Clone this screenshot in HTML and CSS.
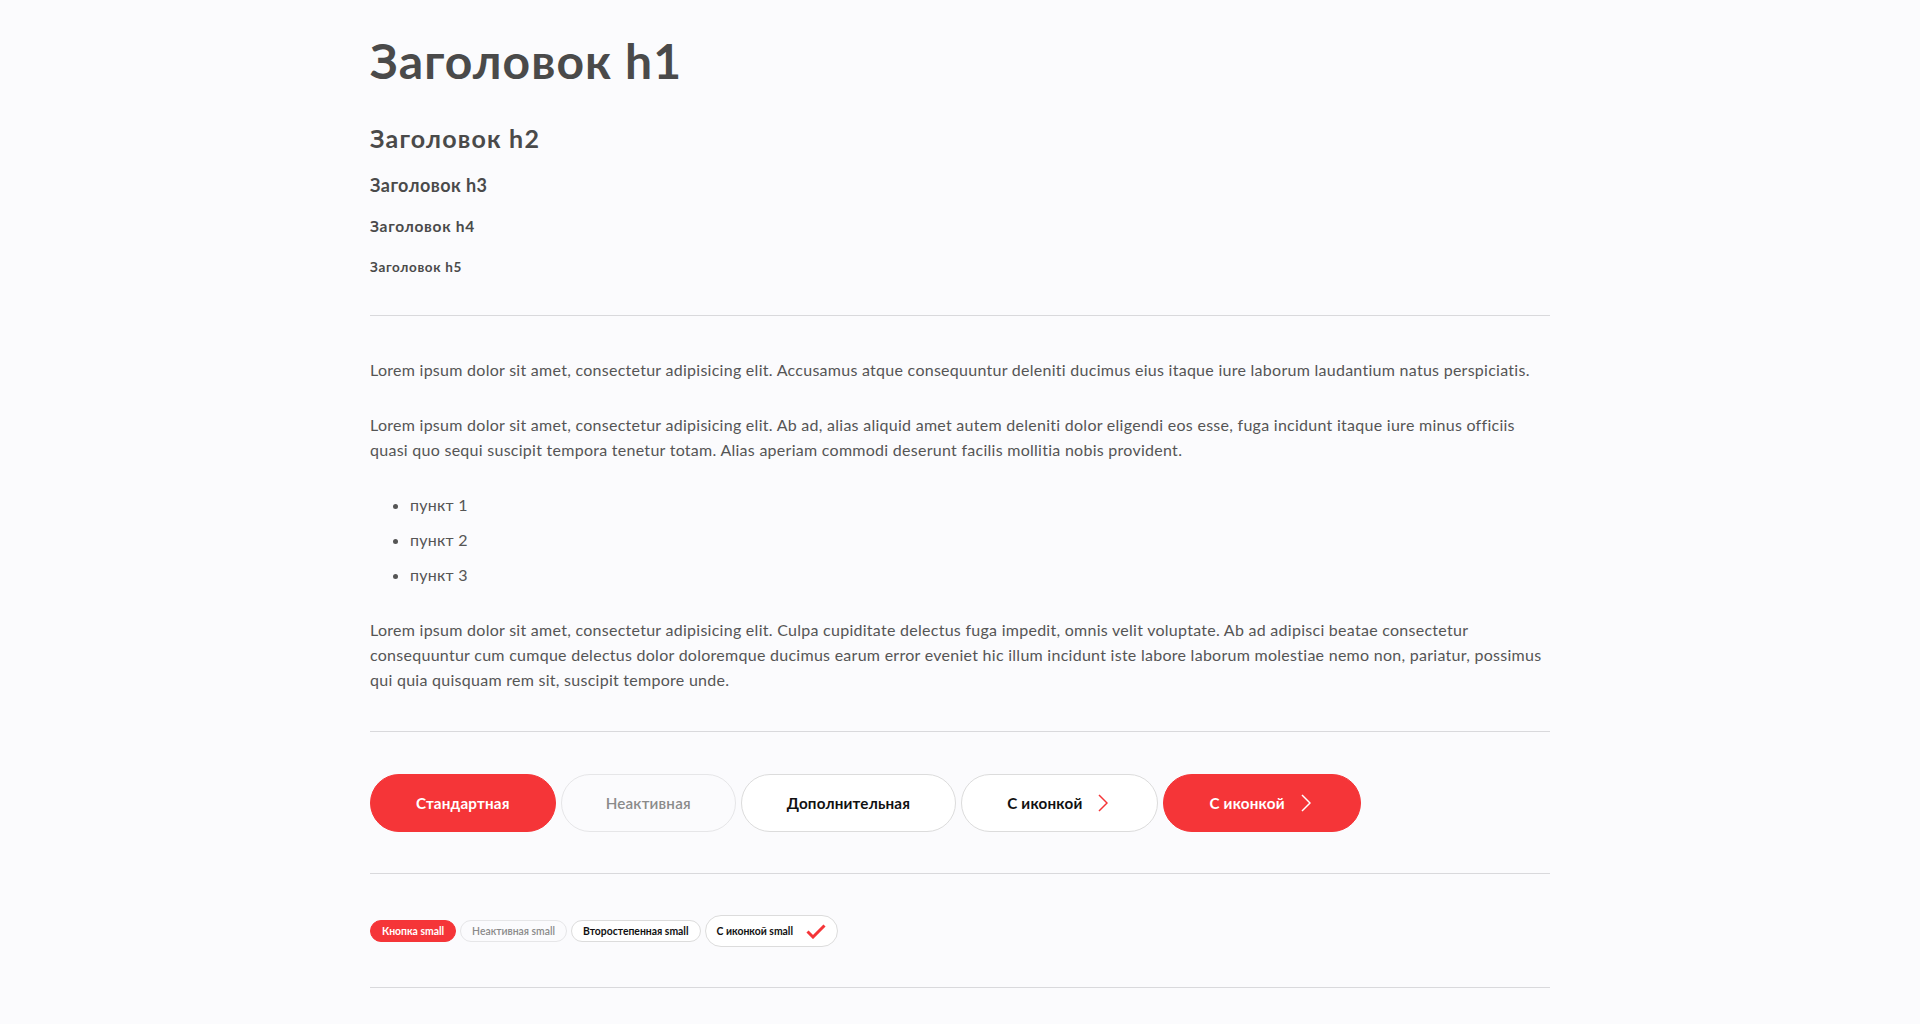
FILE: index.html
```html
<!DOCTYPE html>
<html lang="ru">
<head>
<meta charset="utf-8">
<title>Типографика</title>
<link rel="stylesheet" href="styles.css">
</head>
<body>
<main class="page">
  <section class="headings">
    <h1 class="h1">Заголовок h1</h1>
    <h2 class="h2">Заголовок h2</h2>
    <h3 class="h3">Заголовок h3</h3>
    <h4 class="h4">Заголовок h4</h4>
    <h5 class="h5">Заголовок h5</h5>
  </section>
  <hr class="rule">
  <section class="text">
    <p class="para">Lorem ipsum dolor sit amet, consectetur adipisicing elit. Accusamus atque consequuntur deleniti ducimus eius itaque iure laborum laudantium natus perspiciatis.</p>
    <p class="para">Lorem ipsum dolor sit amet, consectetur adipisicing elit. Ab ad, alias aliquid amet autem deleniti dolor eligendi eos esse, fuga incidunt itaque iure minus officiis quasi quo sequi suscipit tempora tenetur totam. Alias aperiam commodi deserunt facilis mollitia nobis provident.</p>
    <ul class="list">
      <li class="list-item">пункт 1</li>
      <li class="list-item">пункт 2</li>
      <li class="list-item">пункт 3</li>
    </ul>
    <p class="para">Lorem ipsum dolor sit amet, consectetur adipisicing elit. Culpa cupiditate delectus fuga impedit, omnis velit voluptate. Ab ad adipisci beatae consectetur consequuntur cum cumque delectus dolor doloremque ducimus earum error eveniet hic illum incidunt iste labore laborum molestiae nemo non, pariatur, possimus qui quia quisquam rem sit, suscipit tempore unde.</p>
  </section>
  <hr class="rule">
  <section class="btn-row">
    <button class="btn btn-primary">Стандартная</button>
    <button class="btn btn-disabled">Неактивная</button>
    <button class="btn btn-secondary">Дополнительная</button>
    <button class="btn btn-secondary btn-icon">С иконкой
      <svg class="chev" viewBox="0 0 10 18" width="10" height="18"><path d="M1 1 L9 9 L1 17" fill="none" stroke="#f53538" stroke-width="1.5"/></svg>
    </button>
    <button class="btn btn-primary btn-icon">С иконкой
      <svg class="chev" viewBox="0 0 10 18" width="10" height="18"><path d="M1 1 L9 9 L1 17" fill="none" stroke="#ffffff" stroke-width="1.5"/></svg>
    </button>
  </section>
  <hr class="rule">
  <section class="btn-row btn-row-small">
    <button class="sbtn sbtn-primary">Кнопка small</button>
    <button class="sbtn sbtn-disabled">Неактивная small</button>
    <button class="sbtn sbtn-secondary">Второстепенная small</button>
    <button class="sbtn sbtn-secondary sbtn-icon">С иконкой small
      <svg class="check" viewBox="0 0 20 15" width="20" height="15"><path d="M1.5 7.5 L7 13 L18.5 1.5" fill="none" stroke="#f53538" stroke-width="3"/></svg>
    </button>
  </section>
  <hr class="rule">
</main>
</body>
</html>
```
FILE: styles.css
```css
html, body {
  margin: 0;
  padding: 0;
}
body {
  background: #fbfbfd;
  font-family: "Lato", "Open Sans", "Noto Sans", sans-serif;
  color: #555555;
}
.page {
  width: 1180px;
  margin: 0 auto;
  padding-top: 32px;
}
.headings {
  display: flex;
  flex-direction: column;
  align-items: flex-start;
  color: #4a4a4a;
}
.h1, .h2, .h3, .h4, .h5 {
  margin: 0;
  font-weight: 700;
}
.h1 {
  font-size: 48px;
  line-height: 58px;
  letter-spacing: 1.1px;
}
.h2 {
  font-size: 25px;
  line-height: 30px;
  margin-top: 33px;
  letter-spacing: 1.2px;
}
.h3 {
  font-size: 18px;
  line-height: 24px;
  margin-top: 20px;
  letter-spacing: 0.45px;
}
.h4 {
  font-size: 15.5px;
  line-height: 20px;
  margin-top: 19px;
  letter-spacing: 0.7px;
}
.h5 {
  font-size: 13.5px;
  line-height: 18px;
  margin-top: 22px;
  margin-bottom: 39px;
  letter-spacing: 0.65px;
}
.rule {
  margin: 0;
  border: 0;
  border-top: 1px solid #d9d9dc;
  height: 0;
}
.text {
  padding: 41px 0 39px;
  font-size: 16px;
  line-height: 25px;
  letter-spacing: 0.27px;
}
.para {
  margin: 0 0 30px;
}
.para:last-child {
  margin-bottom: 0;
}
.list {
  margin: 0 0 30px;
  padding-left: 40px;
  list-style: disc;
}
.list-item {
  margin-bottom: 10px;
}
.list-item:last-child {
  margin-bottom: 0;
}
.btn-row {
  display: flex;
  align-items: center;
  gap: 5px;
  padding: 42px 0 41px;
}
.btn {
  display: inline-flex;
  align-items: center;
  gap: 16px;
  height: 58px;
  padding: 0 45px;
  border-radius: 29px;
  border: 1px solid #dcdcdc;
  font-family: inherit;
  font-size: 15.2px;
  letter-spacing: 0.2px;
  font-weight: 700;
  cursor: pointer;
}
.btn-icon {
  padding-right: 49px;
}
.btn-primary {
  background: #f53538;
  border-color: #f53538;
  color: #ffffff;
}
.btn-disabled {
  background: #fbfbfd;
  border-color: #e6e6e8;
  color: #8a8a8a;
  font-weight: 600;
  padding: 0 44px;
}
.btn-secondary {
  background: #ffffff;
  color: #111111;
}
.btn-row-small {
  gap: 4px;
  padding: 41px 0 40px;
}
.sbtn {
  display: inline-flex;
  align-items: center;
  gap: 10px;
  height: 22px;
  padding: 0 11px;
  border-radius: 11px;
  border: 1px solid #dcdcdc;
  font-family: inherit;
  font-size: 10.4px;
  font-weight: 700;
}
.sbtn-primary {
  background: #f53538;
  border-color: #f53538;
  color: #ffffff;
}
.sbtn-disabled {
  background: #fbfbfd;
  border-color: #e6e6e8;
  color: #8a8a8a;
  font-weight: 600;
}
.sbtn-secondary {
  background: #ffffff;
  color: #111111;
}
.sbtn-icon {
  height: 32px;
  border-radius: 16px;
  padding: 0 11px 0 11px;
  gap: 13px;
}
.chev, .check {
  display: block;
  flex: none;
}
```
